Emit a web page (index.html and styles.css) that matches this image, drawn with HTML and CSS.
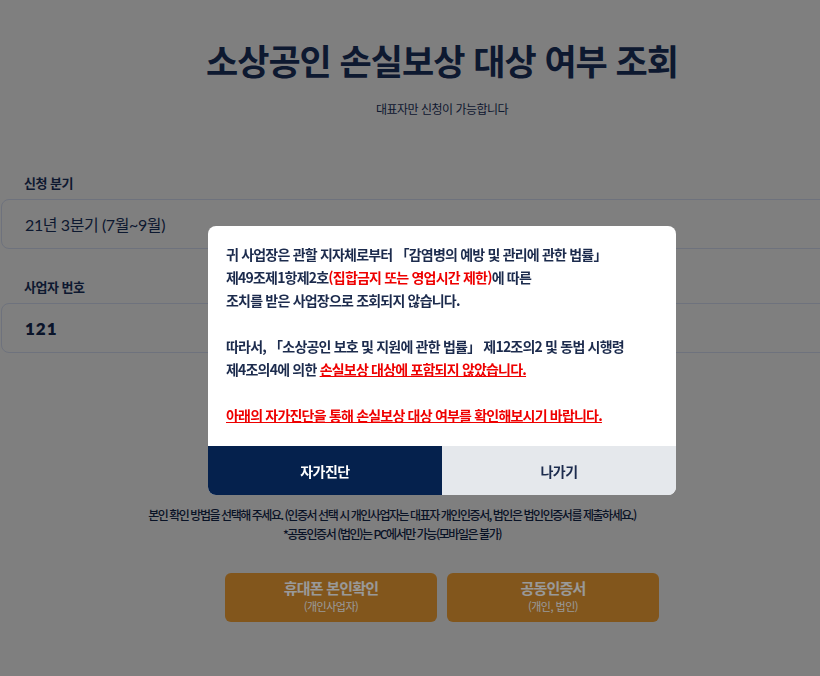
FILE: index.html
```html
<!DOCTYPE html>
<html lang="ko">
<head>
    <meta charset="UTF-8">
    <title>소상공인 손실보상 대상 여부 조회</title>
    <link rel="stylesheet" href="styles.css">
</head>
<body>
<div class="page">
    <h1 class="title">소상공인 손실보상 대상 여부 조회</h1>
    <p class="sub">대표자만 신청이 가능합니다</p>

    <div class="field">
        <label>신청 분기</label>
        <div class="box">21년 3분기 (7월~9월)</div>
    </div>
    <div class="field">
        <label>사업자 번호</label>
        <div class="box num">121</div>
    </div>

    <div class="notice">
        <p>본인 확인 방법을 선택해 주세요. (인증서 선택 시 개인사업자는 대표자 개인인증서, 법인은 법인인증서를 제출하세요.)</p>
        <p>*공동인증서 (법인)는 PC에서만 가능(모바일은 불가)</p>
    </div>

    <div class="auth">
        <button class="auth-btn">휴대폰 본인확인<span>(개인사업자)</span></button>
        <button class="auth-btn">공동인증서<span>(개인, 법인)</span></button>
    </div>
</div>

<div class="dim"></div>
<div class="modal">
    <div class="modal-body">
        <p>귀 사업장은 관할 지자체로부터 「감염병의 예방 및 관리에 관한 법률」<br>
        제49조제1항제2호<span class="red">(집합금지 또는 영업시간 제한)</span>에 따른<br>
        조치를 받은 사업장으로 조회되지 않습니다.</p>
        <p>따라서, 「소상공인 보호 및 지원에 관한 법률」 제12조의2 및 동법 시행령<br>
        제4조의4에 의한 <span class="red line">손실보상 대상에 포함되지 않았습니다.</span></p>
        <p><span class="red line">아래의 자가진단을 통해 손실보상 대상 여부를 확인해보시기 바랍니다.</span></p>
    </div>
    <div class="modal-btns">
        <button class="btn-main">자가진단</button>
        <button class="btn-sub">나가기</button>
    </div>
</div>
</body>
</html>
```

FILE: styles.css
```css
html, body {
    margin: 0;
    overflow: hidden;
}
body {
    background-color: #d4d4d4;
    font-family: "Noto Sans CJK KR", "Noto Sans", sans-serif;
    color: #172b50;
}
.page {
    width: 884px;
    padding: 32px 0 0 0;
}
.title {
    margin: 0;
    text-align: center;
    font-size: 35px;
    font-weight: 700;
    line-height: 56px;
    letter-spacing: -1px;
    color: #162a50;
}
.sub {
    margin: 12px 0 0 0;
    text-align: center;
    font-size: 12px;
    letter-spacing: -0.5px;
}
.field {
    margin-top: 56px;
}
.field + .field {
    margin-top: 28px;
}
.field label {
    display: block;
    padding-left: 24px;
    font-size: 13px;
    font-weight: 700;
    line-height: 20px;
    letter-spacing: -0.5px;
    margin-bottom: 6px;
}
.box {
    margin-left: 1px;
    height: 48px;
    border: 1px solid #b8bfd0;
    border-radius: 8px;
    padding-left: 23px;
    display: flex;
    align-items: center;
    font-family: "Lato", "Noto Sans CJK KR", sans-serif;
    font-size: 16px;
    letter-spacing: -0.4px;
}
.box.num {
    font-weight: 800;
    font-size: 17px;
    letter-spacing: 1px;
    color: #0f2246;
}
.notice {
    margin-top: 152px;
    padding-right: 100px;
    text-align: center;
    font-size: 12px;
    font-weight: 500;
    line-height: 19px;
    letter-spacing: -1.45px;
    color: #0f2040;
}
.notice p {
    margin: 0;
}
.auth {
    margin-top: 30px;
    display: flex;
    justify-content: center;
    gap: 10px;
}
.auth-btn {
    width: 212px;
    height: 49px;
    border: none;
    border-radius: 6px;
    background-color: #d98f2f;
    color: #fff;
    font-family: inherit;
    font-size: 15px;
    font-weight: 700;
    letter-spacing: -0.8px;
    display: flex;
    flex-direction: column;
    align-items: center;
    justify-content: center;
    line-height: 18px;
}
.auth-btn span {
    font-size: 11px;
    font-weight: 400;
    line-height: 19px;
    letter-spacing: -0.5px;
}
.dim {
    position: fixed;
    inset: 0;
    background-color: rgba(0, 0, 0, 0.4);
}
.modal {
    position: absolute;
    left: 208px;
    top: 226px;
    width: 468px;
    background-color: #fff;
    border-radius: 8px;
    overflow: hidden;
}
.modal-body {
    padding: 17px 18px 19px 18px;
    font-size: 14px;
    font-weight: 700;
    line-height: 23px;
    letter-spacing: -0.8px;
    color: #1c2b4d;
}
.modal-body p {
    margin: 0 0 23px 0;
}
.modal-body p:last-child {
    margin: 0;
}
.red {
    color: #ee0000;
}
.line {
    text-decoration: underline;
}
.modal-btns {
    display: flex;
}
.modal-btns button {
    flex: 1;
    height: 49px;
    border: none;
    font-family: inherit;
    font-size: 14px;
    font-weight: 700;
    letter-spacing: -0.5px;
}
.btn-main {
    background-color: #05214d;
    color: #fff;
}
.btn-sub {
    background-color: #e5e8ec;
    color: #1c2b4d;
}
```
